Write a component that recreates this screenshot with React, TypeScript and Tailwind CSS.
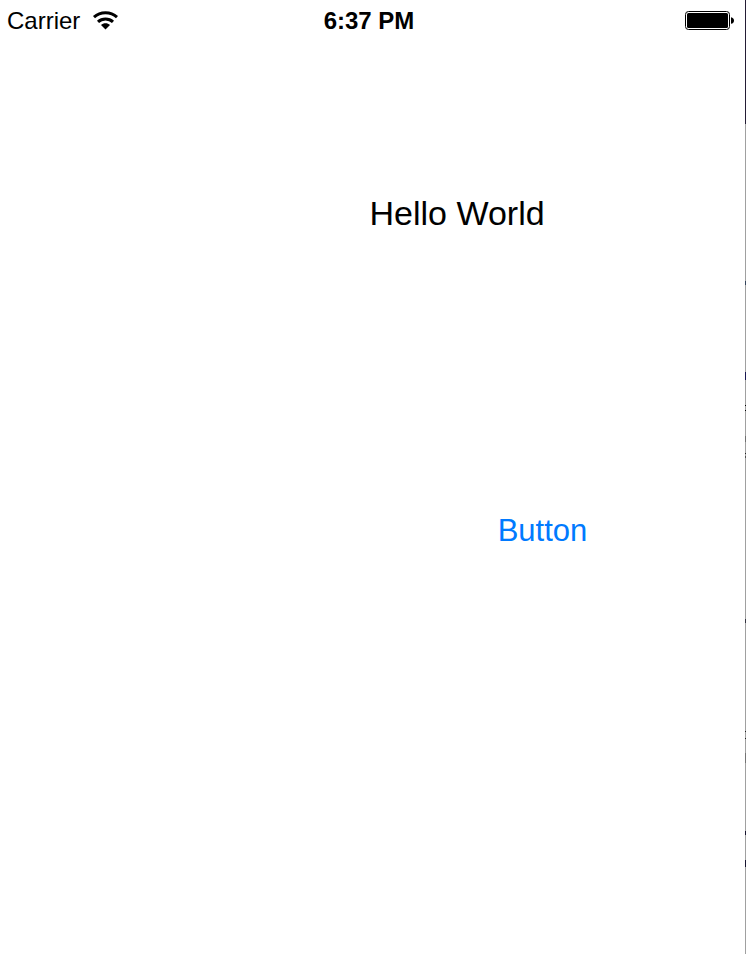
function WifiIcon() {
  return (
    <svg viewBox="0 0 26 20" className="h-5 w-[26px]" aria-label="Wi-Fi" role="img">
      <g fill="none" stroke="#000" strokeWidth="3">
        <path d="M2 6.2C8.4 0.4 18.6 0.4 25 6.2" />
        <path d="M6 10.9C10.2 7 16.8 7 21 10.9" />
      </g>
      <path d="M9 14C11.4 11.7 15.6 11.7 18 14L13.5 18.4Z" fill="#000" />
    </svg>
  );
}

function BatteryIcon() {
  return (
    <svg viewBox="0 0 50 20" className="h-5 w-[50px]" aria-label="Battery full" role="img">
      <rect x="0.5" y="0.5" width="44" height="18" rx="3" fill="#fff" stroke="#000" />
      <rect x="2" y="2" width="41" height="15" rx="1.5" fill="#000" />
      <path d="M46 6.2C50 6.8 50 12.2 46 12.8Z" fill="#000" />
    </svg>
  );
}

function WindowEdge() {
  return (
    <div aria-hidden="true" className="flex w-px shrink-0 flex-col bg-[#a0a0a0]">
      <span className="h-[124px] bg-[#241d35]" />
      <span className="mt-[157px] h-1 bg-[#34445c]" />
      <span className="mt-[87px] h-2 bg-[#191752]" />
      <span className="mt-[25px] h-px bg-black" />
      <span className="mt-1 h-px bg-black" />
      <span className="mt-[25px] h-1.5 bg-[#707070]" />
      <span className="mt-[11px] h-px bg-[#202020]" />
      <span className="mt-0.5 h-0.5 bg-[#505050]" />
      <span className="mt-[161px] h-1 bg-[#343440]" />
      <span className="mt-[108px] h-px bg-[#202020]" />
      <span className="mt-1.5 h-px bg-[#202020]" />
      <span className="mt-3.5 h-[10px] bg-[#747474]" />
      <span className="mt-[68px] h-1 bg-[#17142f]" />
      <span className="mt-[25px] h-[7px] bg-[#17142f]" />
    </div>
  );
}

export default function App() {
  return (
    <div className="flex min-h-screen bg-white font-['Liberation_Sans',Arial,sans-serif] text-black">
      <div className="flex min-w-0 flex-1 flex-col">
        <header className="flex h-[42px] items-center justify-between pr-[10px] pl-[7px] text-2xl">
          <div className="flex w-28 items-center gap-3">
            <span>Carrier</span>
            <WifiIcon />
          </div>
          <time className="font-bold">6:37 PM</time>
          <div className="flex w-[116px] justify-end">
            <BatteryIcon />
          </div>
        </header>
        <main className="flex flex-col">
          <h1 className="mt-[151px] pl-[49.6%] text-[34px] leading-10">Hello World</h1>
          <div className="mt-[278px] flex pl-[66.8%]">
            <button type="button" className="text-[31px] leading-10 text-[#007aff]">
              Button
            </button>
          </div>
        </main>
      </div>
      <WindowEdge />
    </div>
  );
}
